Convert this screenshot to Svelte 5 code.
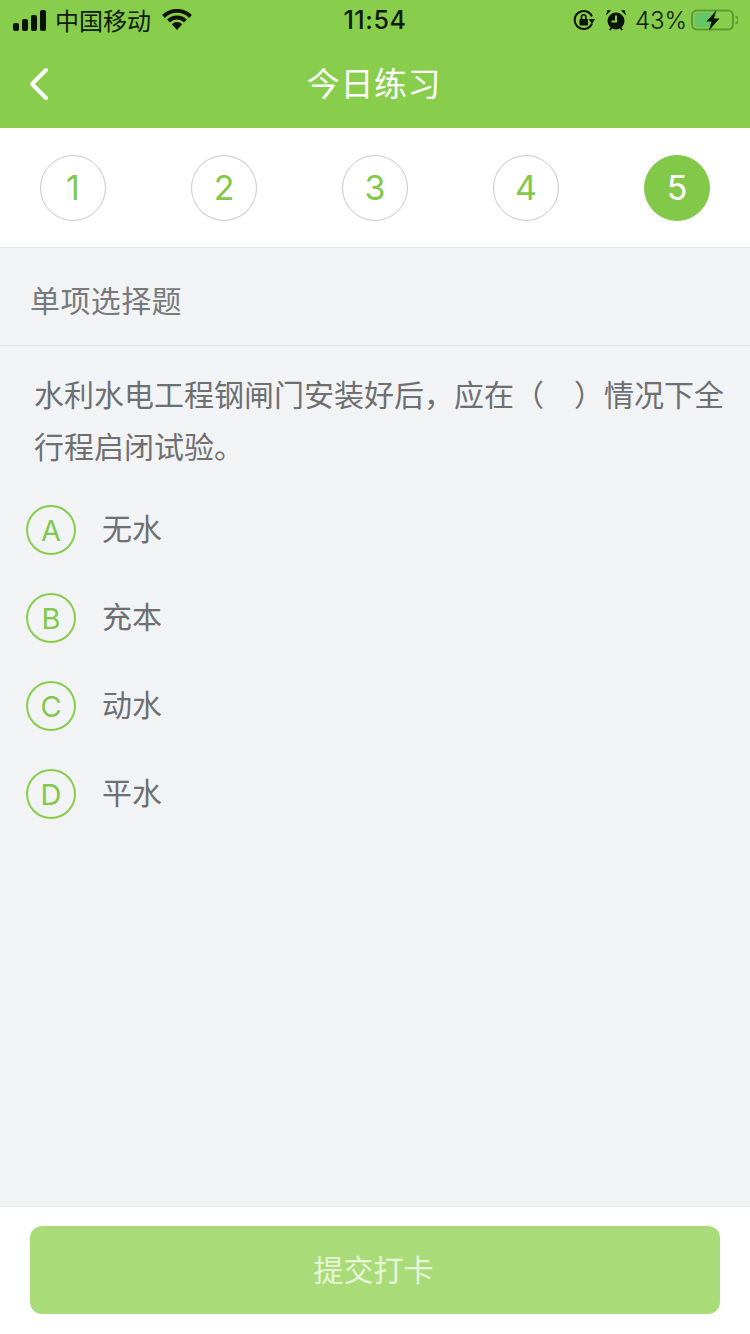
<script>
	let steps = [1, 2, 3, 4, 5];
	let current = 5;
	let options = [
		{ key: "A", text: "无水" },
		{ key: "B", text: "充本" },
		{ key: "C", text: "动水" },
		{ key: "D", text: "平水" }
	];
</script>

<div class="page">
	<header class="top">
		<div class="status">
			<div class="status-left">
				<svg class="signal" width="34" height="21" viewBox="0 0 34 21">
					<rect x="0" y="13" width="6" height="8" rx="2" />
					<rect x="9" y="9" width="6" height="12" rx="2" />
					<rect x="18" y="5" width="6" height="16" rx="2" />
					<rect x="27" y="0" width="6" height="21" rx="2" />
				</svg>
				<span class="carrier">中国移动</span>
				<svg class="wifi" width="30" height="22" viewBox="0 0 30 22">
					<path d="M1.5 7.5 A19 19 0 0 1 28.5 7.5" />
					<path d="M6.5 12 A12 12 0 0 1 23.5 12" />
					<path class="wifi-tip" d="M9.8 15.2 A7.5 7.5 0 0 1 20.2 15.2 L15 21 Z" />
				</svg>
			</div>
			<span class="time">11:54</span>
			<div class="status-right">
				<svg width="22" height="22" viewBox="0 0 22 22">
					<path class="lock-ring" d="M19 7.5 A9 9 0 1 0 19 14.5" />
					<path class="lock-arrow" d="M15.5 10 L22 10 L19 15 Z" />
					<rect class="lock-body" x="6.5" y="10" width="8.5" height="6.5" rx="1" />
					<path class="lock-ring thin" d="M8.5 10 V8 a2.2 2.2 0 0 1 4.4 0 V10" />
				</svg>
				<svg class="alarm" width="22" height="22" viewBox="0 0 22 22">
					<circle cx="11" cy="12" r="8.5" />
					<path d="M1 6.5 L6 1.5 L2.5 1 Z M21 6.5 L16 1.5 L19.5 1 Z" />
					<path d="M4 20.5 L6 18 L7.5 19 L5.5 21.5 Z M18 20.5 L16 18 L14.5 19 L16.5 21.5 Z" />
					<path class="hands" d="M11 6.5 V12.5 H6.5" />
				</svg>
				<span class="percent">43%</span>
				<svg class="batt" width="47" height="22" viewBox="0 0 47 22">
					<rect class="batt-shell" x="1" y="1.5" width="41" height="19" rx="5" />
					<rect class="batt-fill" x="3.5" y="4" width="17" height="14" rx="2" />
					<path class="batt-cap" d="M44.5 8 a3 3 0 0 1 0 6" />
					<path d="M25.5 1 L15.5 12.5 H20.5 L18 21.5 L28.5 9.5 H23 Z" />
				</svg>
			</div>
		</div>
		<div class="nav">
			<svg class="back" width="22" height="34" viewBox="0 0 22 34">
				<path d="M18 3 L4 17 L18 31" />
			</svg>
			<h1>今日练习</h1>
		</div>
	</header>

	<div class="steps">
		{#each steps as n}
			<div class="step" class:active={n === current}>{n}</div>
		{/each}
	</div>

	<main class="body">
		<div class="type">单项选择题</div>
		<div class="question">水利水电工程钢闸门安装好后，应在（<span class="blank"></span>）情况下全行程启闭试验。</div>
		<div class="options">
			{#each options as o}
				<div class="option">
					<span class="letter">{o.key}</span>
					<span class="label">{o.text}</span>
				</div>
			{/each}
		</div>
	</main>

	<footer class="bottom">
		<button class="submit">提交打卡</button>
	</footer>
</div>

<style>
	:global(body) {
		margin: 0;
		background: #f2f3f5;
	}
	.page {
		width: 750px;
		height: 1334px;
		display: flex;
		flex-direction: column;
		font-family: "Liberation Sans", "Noto Sans CJK SC", sans-serif;
		background: #f2f3f5;
		overflow: hidden;
	}
	.top {
		background: #88cd4c;
		height: 128px;
		flex: none;
	}
	.status {
		height: 40px;
		display: flex;
		align-items: center;
		justify-content: space-between;
		padding: 0 12px 0 13px;
		position: relative;
		color: #0f1a08;
	}
	.status-left, .status-right {
		display: flex;
		align-items: center;
	}
	.signal {
		fill: #0a1405;
	}
	.carrier {
		font-size: 24px;
		margin: 0 0 2px 8px;
		font-weight: 400;
	}
	.wifi {
		margin-left: 11px;
	}
	.wifi path {
		fill: none;
		stroke: #0a1405;
		stroke-width: 4;
	}
	.wifi .wifi-tip {
		fill: #0a1405;
		stroke: none;
	}
	.time {
		position: absolute;
		left: 0;
		right: 0;
		text-align: center;
		font-size: 25px;
		font-family: "Inter", "Liberation Sans", sans-serif;
		font-weight: 500;
		letter-spacing: 0.6px;
	}
	.status-right svg {
		fill: #0a1405;
	}
	.lock-ring {
		fill: none !important;
		stroke: #0a1405;
		stroke-width: 2;
	}
	.lock-ring.thin {
		stroke-width: 1.6;
	}
	.alarm {
		margin-left: 10px;
	}
	.alarm .hands {
		fill: none;
		stroke: #88cd4c;
		stroke-width: 2;
	}
	.percent {
		font-size: 24px;
		margin: 0 4px 0 8px;
		font-family: "Inter", "Liberation Sans", sans-serif;
		font-weight: 300;
	}
	.batt-shell {
		fill: none !important;
		stroke: #5c9b34;
		stroke-width: 2;
	}
	.batt-fill {
		fill: #64c466 !important;
	}
	.batt-cap {
		fill: none !important;
		stroke: #5c9b34;
		stroke-width: 2;
	}
	.nav {
		height: 88px;
		display: flex;
		align-items: center;
		justify-content: center;
		position: relative;
	}
	.back {
		position: absolute;
		left: 28px;
		top: 0;
		bottom: 0;
		margin: auto 0;
	}
	.back path {
		fill: none;
		stroke: #fff;
		stroke-width: 4;
		stroke-linecap: round;
		stroke-linejoin: round;
	}
	h1 {
		margin: 0 2px 4px 0;
		color: #fff;
		font-size: 33px;
		font-weight: 400;
		letter-spacing: 0.6px;
	}
	.steps {
		background: #fff;
		height: 119px;
		border-bottom: 1px solid #e6e6e8;
		flex: none;
		display: flex;
		justify-content: space-between;
		align-items: center;
		padding: 0 40px;
	}
	.step {
		width: 64px;
		height: 64px;
		border: 1px solid #c9c9c9;
		border-radius: 50%;
		display: flex;
		align-items: center;
		justify-content: center;
		color: #82c94a;
		font-size: 34px;
		font-family: "Inter", "Liberation Sans", sans-serif;
		font-weight: 400;
	}
	.step.active {
		background: #82c94a;
		border-color: #82c94a;
		color: #fff;
	}
	.body {
		flex: 1;
	}
	.type {
		height: 98px;
		box-sizing: border-box;
		border-bottom: 1px solid #e6e7e9;
		padding: 5px 0 0 30px;
		display: flex;
		align-items: center;
		color: #78797b;
		font-size: 30px;
		letter-spacing: 0.4px;
	}
	.question {
		padding: 24px 18px 0 34px;
		font-size: 30px;
		line-height: 52px;
		color: #6e6f71;
	}
	.blank {
		display: inline-block;
		width: 30px;
	}
	.options {
		margin-top: 10px;
		padding-left: 26px;
	}
	.option {
		height: 88px;
		display: flex;
		align-items: center;
	}
	.letter {
		width: 46px;
		height: 45px;
		border: 2px solid #88cd4c;
		border-radius: 50%;
		display: flex;
		align-items: center;
		justify-content: center;
		color: #82c94a;
		font-size: 29px;
		font-family: "Inter", "Liberation Sans", sans-serif;
		font-weight: 400;
		margin-top: 3px;
		padding-top: 1px;
		box-sizing: content-box;
	}
	.label {
		margin-left: 26px;
		font-size: 30px;
		color: #6e6f71;
		margin-bottom: 2px;
	}
	.bottom {
		flex: none;
		height: 128px;
		box-sizing: border-box;
		background: #fff;
		border-top: 1px solid #e6e7e9;
		padding: 19px 30px 0;
	}
	.submit {
		display: block;
		width: 100%;
		height: 88px;
		border: none;
		border-radius: 12px;
		background: #a9dc78;
		color: #e8f6da;
		font-size: 30px;
		font-family: inherit;
		padding: 0 3px 4px 0;
	}
</style>
